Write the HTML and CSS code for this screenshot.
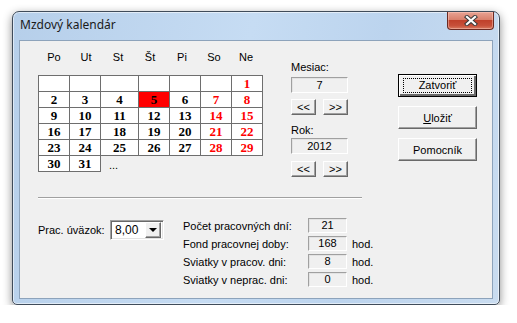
FILE: index.html
```html
<!DOCTYPE html>
<html lang="sk">
  <head>
    <meta charset="UTF-8" />
    <title>Mzdový kalendár</title>
    <link rel="stylesheet" href="styles.css">
  </head>
  <body>
    <div class="window">
      <div class="titlebar">
        <span class="title">Mzdový kalendár</span>
        <button class="close" title="Zavrieť">
          <svg width="14" height="11" viewBox="0 0 14 11">
            <path d="M3 2 L11 9 M11 2 L3 9" stroke="#3b3b3b" stroke-width="4.2" stroke-linecap="square" />
            <path d="M3 2 L11 9 M11 2 L3 9" stroke="#ffffff" stroke-width="2.2" stroke-linecap="square" />
          </svg>
        </button>
      </div>

      <div class="client">
        <div class="top">
          <div class="calendar">
            <div class="weekdays">
              <span>Po</span><span>Ut</span><span>St</span><span>Št</span><span>Pi</span><span>So</span><span>Ne</span>
            </div>
            <table class="days">
              <tr><td></td><td></td><td></td><td></td><td></td><td></td><td class="free">1</td></tr>
              <tr><td>2</td><td>3</td><td>4</td><td class="today">5</td><td>6</td><td class="free">7</td><td class="free">8</td></tr>
              <tr><td>9</td><td>10</td><td>11</td><td>12</td><td>13</td><td class="free">14</td><td class="free">15</td></tr>
              <tr><td>16</td><td>17</td><td>18</td><td>19</td><td>20</td><td class="free">21</td><td class="free">22</td></tr>
              <tr><td>23</td><td>24</td><td>25</td><td>26</td><td>27</td><td class="free">28</td><td class="free">29</td></tr>
              <tr><td>30</td><td>31</td><td class="none more">...</td><td class="none"></td><td class="none"></td><td class="none"></td><td class="none"></td></tr>
            </table>
          </div>

          <div class="period">
            <div class="label">Mesiac:</div>
            <div class="field">7</div>
            <div class="steps">
              <button class="btn step">&lt;&lt;</button>
              <button class="btn step">&gt;&gt;</button>
            </div>
            <div class="label year">Rok:</div>
            <div class="field year-field">2012</div>
            <div class="steps">
              <button class="btn step">&lt;&lt;</button>
              <button class="btn step">&gt;&gt;</button>
            </div>
          </div>

          <div class="actions">
            <button class="btn action default"><span class="focus">Zatvoriť</span></button>
            <button class="btn action"><u>U</u>ložiť</button>
            <button class="btn action">Pomocník</button>
          </div>
        </div>

        <div class="separator"></div>

        <div class="bottom">
          <div class="load">
            <span class="load-label">Prac. úväzok:</span>
            <div class="combo">
              <span class="combo-value">8,00</span>
              <span class="combo-arrow"></span>
            </div>
          </div>

          <div class="stats">
            <span>Počet pracovných dní:</span><span class="field small">21</span><span></span>
            <span>Fond pracovnej doby:</span><span class="field small">168</span><span>hod.</span>
            <span>Sviatky v pracov. dni:</span><span class="field small">8</span><span>hod.</span>
            <span>Sviatky v neprac. dni:</span><span class="field small">0</span><span>hod.</span>
          </div>
        </div>
      </div>
    </div>
  </body>
</html>
```

FILE: styles.css
```css
body {
    margin: 0;
    background-color: #fff;
    font-family: "Liberation Sans", Arial, sans-serif;
    font-size: 11px;
    color: #000;
}
.window {
    box-sizing: border-box;
    width: 488px;
    height: 294px;
    margin: 11px 0 0 12px;
    border: 1px solid #404c5a;
    border-radius: 7px 7px 5px 5px;
    padding: 0 6px 5px 6px;
    background: linear-gradient(100deg, #b6cfea 0%, #c6dcf3 45%, #bcd4ee 70%, #c9dcf0 100%);
    box-shadow: 0 3px 10px rgba(0, 0, 0, 0.45), inset 0 0 0 1px rgba(255, 255, 255, 0.55);
    display: flex;
    flex-direction: column;
}
.titlebar {
    height: 28px;
    display: flex;
    align-items: flex-start;
}
.title {
    font-family: "Noto Sans", "Open Sans", sans-serif;
    font-size: 12px;
    line-height: 16px;
    padding: 5px 0 0 1px;
    color: #1a1a1a;
}
.close {
    margin-left: auto;
    margin-right: -1px;
    width: 47px;
    height: 18px;
    padding: 0;
    border: 1px solid #6b2a22;
    border-top: none;
    border-radius: 0 0 4px 4px;
    background: linear-gradient(#e8a393 0%, #d9806c 45%, #c0412b 50%, #c7503a 80%, #d87a5f 100%);
    box-shadow: inset 0 0 0 1px rgba(255, 210, 200, 0.45);
    display: flex;
    align-items: center;
    justify-content: center;
}
.client {
    flex: 1;
    border: 1px solid #8da3bb;
    background-color: #f0f0f0;
    padding-left: 18px;
}
.top {
    display: flex;
    align-items: flex-start;
    height: 136px;
}
.calendar {
    width: 225px;
}
.weekdays {
    display: flex;
    padding-top: 9px;
    margin-bottom: 11px;
    line-height: 14px;
}
.weekdays span {
    width: 32px;
    text-align: center;
}
.days {
    border-collapse: collapse;
    font-family: "Liberation Serif", "Times New Roman", serif;
    font-weight: bold;
    font-size: 13px;
}
.days td {
    width: 31px;
    height: 15px;
    padding: 0;
    border: 1px solid #6e6e6e;
    background-color: #fff;
    text-align: center;
    line-height: 14px;
}
.days td.free {
    color: #ff0000;
}
.days td.today {
    background-color: #ff0000;
}
.days td.none {
    border: none;
    background: none;
}
.days td.more {
    font-family: "Liberation Sans", Arial, sans-serif;
    font-weight: normal;
    font-size: 11px;
    text-align: left;
    padding-left: 8px;
    vertical-align: bottom;
}
.period {
    width: 57px;
    margin-left: 28px;
}
.label {
    margin-top: 19px;
    line-height: 14px;
}
.label.year {
    margin-top: 8px;
}
.field {
    box-sizing: border-box;
    height: 16px;
    margin-top: 3px;
    border: 1px solid;
    border-color: #a0a0a0 #fff #fff #a0a0a0;
    box-shadow: inset 1px 1px 0 #e3e3e3;
    text-align: center;
    line-height: 14px;
}
.year-field {
    margin-top: 1px;
}
.steps {
    display: flex;
    justify-content: space-between;
    margin-top: 6px;
}
.steps + .label {
    margin-top: 8px;
}
.period .year-field + .steps {
    margin-top: 7px;
}
.btn {
    box-sizing: border-box;
    padding: 0;
    border: 1px solid;
    border-color: #fff #696969 #696969 #fff;
    box-shadow: inset -1px -1px 0 #a0a0a0;
    background-color: #f0f0f0;
    font-family: "Liberation Sans", Arial, sans-serif;
    font-size: 11px;
    color: #000;
}
.step {
    width: 25px;
    height: 16px;
    line-height: 13px;
}
.actions {
    width: 79px;
    margin-left: 50px;
    display: flex;
    flex-direction: column;
}
.action {
    height: 23px;
    margin-top: 9px;
}
.action.default {
    margin-top: 33px;
    border: 1px solid #000;
    box-shadow: inset 1px 1px 0 #fff, inset -2px -2px 0 #696969;
    padding: 3px 4px;
}
.focus {
    display: block;
    height: 13px;
    line-height: 13px;
    border: 1px dotted #000;
}
.separator {
    width: 324px;
    margin-top: 20px;
    border-top: 1px solid #a0a0a0;
    border-bottom: 1px solid #fff;
}
.bottom {
    display: flex;
    align-items: flex-start;
    margin-top: 19px;
}
.load {
    display: flex;
    align-items: center;
    padding-top: 2px;
}
.load-label {
    width: 72px;
}
.combo {
    box-sizing: border-box;
    width: 54px;
    height: 20px;
    border: 1px solid;
    border-color: #a0a0a0 #fff #fff #a0a0a0;
    box-shadow: inset 1px 1px 0 #696969, inset -1px -1px 0 #e3e3e3;
    background-color: #fff;
    display: flex;
    align-items: center;
    padding: 1px 2px 1px 1px;
}
.combo-value {
    flex: 1;
    padding-left: 3px;
    font-size: 12px;
}
.combo-arrow {
    box-sizing: border-box;
    width: 16px;
    height: 16px;
    border: 1px solid;
    border-color: #fff #696969 #696969 #fff;
    box-shadow: inset -1px -1px 0 #a0a0a0;
    background-color: #f0f0f0;
    position: relative;
}
.combo-arrow::after {
    content: "";
    position: absolute;
    left: 3px;
    top: 5px;
    border-left: 4px solid transparent;
    border-right: 4px solid transparent;
    border-top: 4px solid #000;
}
.stats {
    margin-left: 19px;
    display: grid;
    grid-template-columns: 125px 39px auto;
    grid-auto-rows: 15px;
    row-gap: 3px;
    align-items: center;
}
.stats .field.small {
    height: 15px;
    margin-top: 0;
    line-height: 13px;
}
.stats span:nth-child(3n) {
    padding-left: 5px;
}
```
